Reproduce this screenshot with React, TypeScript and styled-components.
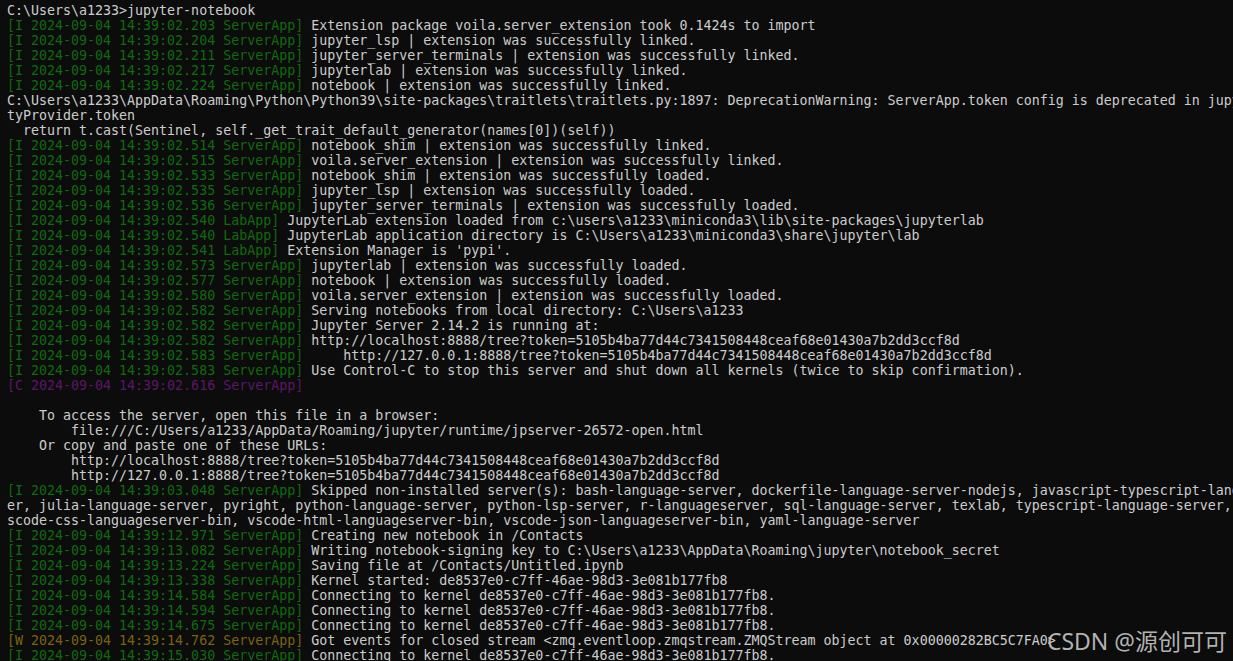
import React from "react";
import styled, { createGlobalStyle } from "styled-components";

const Global = createGlobalStyle`
  html, body { margin: 0; padding: 0; background: #0c0c0c; }
  body { overflow: hidden; }
`;

type Level = "I" | "C" | "W" | null;

const prefixColor: Record<string, string> = {
  I: "#0f6b0f",
  C: "#5c1669",
  W: "#7a6410",
};

const Screen = styled.div`
  position: relative;
  width: 1233px;
  height: 661px;
  overflow: hidden;
  background: #0c0c0c;
  padding: 3px 0 0 7px;
  box-sizing: border-box;
`;

const Output = styled.div`
  display: flex;
  flex-direction: column;
  font-family: "DejaVu Sans Mono", "Liberation Mono", monospace;
  font-size: 13.3px;
  color: #cccccc;
`;

const Line = styled.div`
  height: 15px;
  line-height: 15px;
  white-space: pre;
  overflow: visible;
`;

const Prefix = styled.span<{ $level: string }>`
  color: ${(p) => prefixColor[p.$level]};
`;

const Watermark = styled.div`
  position: absolute;
  right: 6px;
  bottom: 6px;
  font-family: "Noto Sans", "Noto Sans CJK SC", sans-serif;
  font-size: 23px;
  line-height: 28px;
  color: rgba(210, 210, 210, 0.85);
  letter-spacing: 0px;
`;

const tok = "5105b4ba77d44c7341508448ceaf68e01430a7b2dd3ccf8d";
const kid = "de8537e0-c7ff-46ae-98d3-3e081b177fb8";

type L = { lv: Level; t?: string; app?: string; msg: string };

const lines: L[] = [
  { lv: null, msg: "C:\\Users\\a1233>jupyter-notebook" },
  { lv: "I", t: "02.203", msg: "Extension package voila.server_extension took 0.1424s to import" },
  { lv: "I", t: "02.204", msg: "jupyter_lsp | extension was successfully linked." },
  { lv: "I", t: "02.211", msg: "jupyter_server_terminals | extension was successfully linked." },
  { lv: "I", t: "02.217", msg: "jupyterlab | extension was successfully linked." },
  { lv: "I", t: "02.224", msg: "notebook | extension was successfully linked." },
  { lv: null, msg: "C:\\Users\\a1233\\AppData\\Roaming\\Python\\Python39\\site-packages\\traitlets\\traitlets.py:1897: DeprecationWarning: ServerApp.token config is deprecated in jupyter_server 2.0. Use Identi" },
  { lv: null, msg: "tyProvider.token" },
  { lv: null, msg: "  return t.cast(Sentinel, self._get_trait_default_generator(names[0])(self))" },
  { lv: "I", t: "02.514", msg: "notebook_shim | extension was successfully linked." },
  { lv: "I", t: "02.515", msg: "voila.server_extension | extension was successfully linked." },
  { lv: "I", t: "02.533", msg: "notebook_shim | extension was successfully loaded." },
  { lv: "I", t: "02.535", msg: "jupyter_lsp | extension was successfully loaded." },
  { lv: "I", t: "02.536", msg: "jupyter_server_terminals | extension was successfully loaded." },
  { lv: "I", t: "02.540", app: "LabApp", msg: "JupyterLab extension loaded from c:\\users\\a1233\\miniconda3\\lib\\site-packages\\jupyterlab" },
  { lv: "I", t: "02.540", app: "LabApp", msg: "JupyterLab application directory is C:\\Users\\a1233\\miniconda3\\share\\jupyter\\lab" },
  { lv: "I", t: "02.541", app: "LabApp", msg: "Extension Manager is 'pypi'." },
  { lv: "I", t: "02.573", msg: "jupyterlab | extension was successfully loaded." },
  { lv: "I", t: "02.577", msg: "notebook | extension was successfully loaded." },
  { lv: "I", t: "02.580", msg: "voila.server_extension | extension was successfully loaded." },
  { lv: "I", t: "02.582", msg: "Serving notebooks from local directory: C:\\Users\\a1233" },
  { lv: "I", t: "02.582", msg: "Jupyter Server 2.14.2 is running at:" },
  { lv: "I", t: "02.582", msg: `http://localhost:8888/tree?token=${tok}` },
  { lv: "I", t: "02.583", msg: `    http://127.0.0.1:8888/tree?token=${tok}` },
  { lv: "I", t: "02.583", msg: "Use Control-C to stop this server and shut down all kernels (twice to skip confirmation)." },
  { lv: "C", t: "02.616", msg: "" },
  { lv: null, msg: "" },
  { lv: null, msg: "    To access the server, open this file in a browser:" },
  { lv: null, msg: "        file:///C:/Users/a1233/AppData/Roaming/jupyter/runtime/jpserver-26572-open.html" },
  { lv: null, msg: "    Or copy and paste one of these URLs:" },
  { lv: null, msg: `        http://localhost:8888/tree?token=${tok}` },
  { lv: null, msg: `        http://127.0.0.1:8888/tree?token=${tok}` },
  { lv: "I", t: "03.048", msg: "Skipped non-installed server(s): bash-language-server, dockerfile-language-server-nodejs, javascript-typescript-langua" },
  { lv: null, msg: "er, julia-language-server, pyright, python-language-server, python-lsp-server, r-languageserver, sql-language-server, texlab, typescript-language-server, v" },
  { lv: null, msg: "scode-css-languageserver-bin, vscode-html-languageserver-bin, vscode-json-languageserver-bin, yaml-language-server" },
  { lv: "I", t: "12.971", msg: "Creating new notebook in /Contacts" },
  { lv: "I", t: "13.082", msg: "Writing notebook-signing key to C:\\Users\\a1233\\AppData\\Roaming\\jupyter\\notebook_secret" },
  { lv: "I", t: "13.224", msg: "Saving file at /Contacts/Untitled.ipynb" },
  { lv: "I", t: "13.338", msg: `Kernel started: ${kid}` },
  { lv: "I", t: "14.584", msg: `Connecting to kernel ${kid}.` },
  { lv: "I", t: "14.594", msg: `Connecting to kernel ${kid}.` },
  { lv: "I", t: "14.675", msg: `Connecting to kernel ${kid}.` },
  { lv: "W", t: "14.762", msg: "Got events for closed stream <zmq.eventloop.zmqstream.ZMQStream object at 0x00000282BC5C7FA0>" },
  { lv: "I", t: "15.030", msg: `Connecting to kernel ${kid}.` },
];

const LogLine: React.FC<{ l: L }> = ({ l }) => (
  <Line>
    {l.lv && (
      <Prefix $level={l.lv}>
        {`[${l.lv} 2024-09-04 14:39:${l.t} ${l.app ?? "ServerApp"}]`}
      </Prefix>
    )}
    {l.lv && l.msg ? " " : ""}
    {l.msg}
  </Line>
);

export default function App() {
  return (
    <>
      <Global />
      <Screen>
        <Output>
          {lines.map((l, i) => (
            <LogLine key={i} l={l} />
          ))}
        </Output>
        <Watermark>CSDN @源创可可</Watermark>
      </Screen>
    </>
  );
}
